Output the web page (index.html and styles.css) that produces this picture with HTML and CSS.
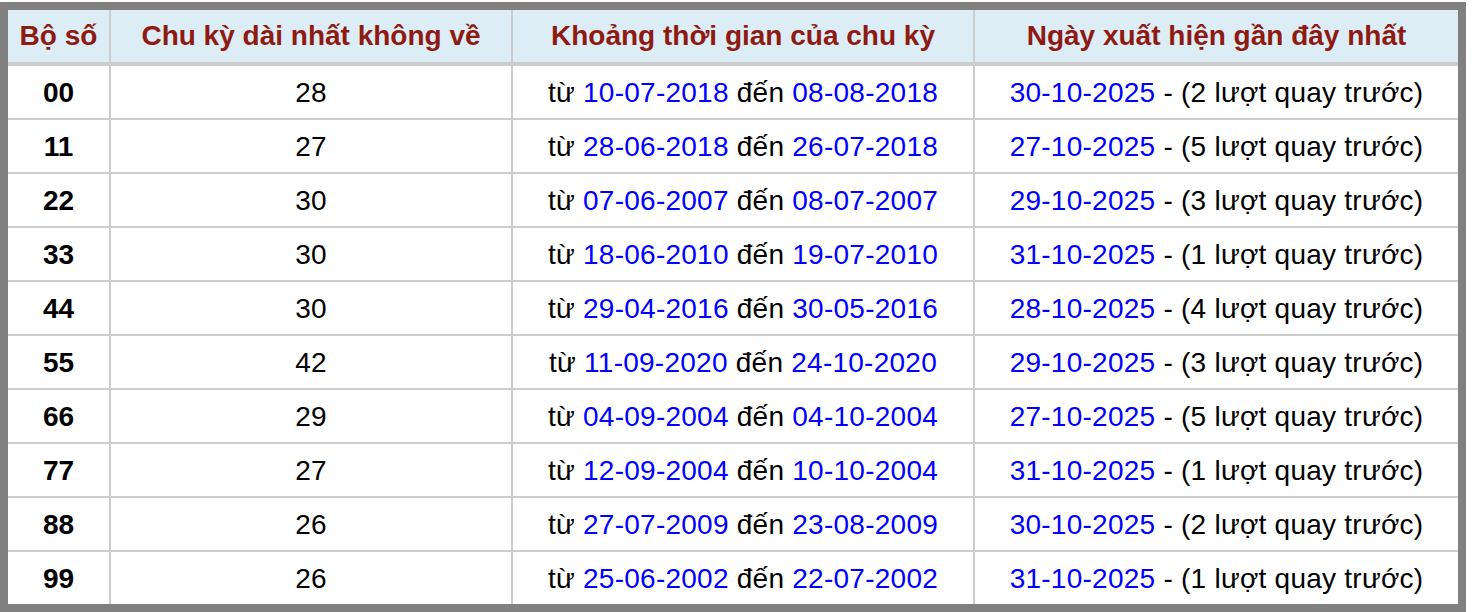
FILE: index.html
```html
<!DOCTYPE html>
<html lang="vi">
<head>
<meta charset="utf-8">
<title>Chu kỳ dài nhất không về</title>
<link rel="stylesheet" href="styles.css">
</head>
<body>
<table class="stats">
  <colgroup>
    <col class="c1"><col class="c2"><col class="c3"><col class="c4">
  </colgroup>
  <thead>
    <tr>
      <th>Bộ số</th>
      <th>Chu kỳ dài nhất không về</th>
      <th>Khoảng thời gian của chu kỳ</th>
      <th>Ngày xuất hiện gần đây nhất</th>
    </tr>
  </thead>
  <tbody>
    <tr><td class="num">00</td><td>28</td><td>từ <span class="d">10-07-2018</span> đến <span class="d">08-08-2018</span></td><td><span class="d">30-10-2025</span> - (2 lượt quay trước)</td></tr>
    <tr><td class="num">11</td><td>27</td><td>từ <span class="d">28-06-2018</span> đến <span class="d">26-07-2018</span></td><td><span class="d">27-10-2025</span> - (5 lượt quay trước)</td></tr>
    <tr><td class="num">22</td><td>30</td><td>từ <span class="d">07-06-2007</span> đến <span class="d">08-07-2007</span></td><td><span class="d">29-10-2025</span> - (3 lượt quay trước)</td></tr>
    <tr><td class="num">33</td><td>30</td><td>từ <span class="d">18-06-2010</span> đến <span class="d">19-07-2010</span></td><td><span class="d">31-10-2025</span> - (1 lượt quay trước)</td></tr>
    <tr><td class="num">44</td><td>30</td><td>từ <span class="d">29-04-2016</span> đến <span class="d">30-05-2016</span></td><td><span class="d">28-10-2025</span> - (4 lượt quay trước)</td></tr>
    <tr><td class="num">55</td><td>42</td><td>từ <span class="d">11-09-2020</span> đến <span class="d">24-10-2020</span></td><td><span class="d">29-10-2025</span> - (3 lượt quay trước)</td></tr>
    <tr><td class="num">66</td><td>29</td><td>từ <span class="d">04-09-2004</span> đến <span class="d">04-10-2004</span></td><td><span class="d">27-10-2025</span> - (5 lượt quay trước)</td></tr>
    <tr><td class="num">77</td><td>27</td><td>từ <span class="d">12-09-2004</span> đến <span class="d">10-10-2004</span></td><td><span class="d">31-10-2025</span> - (1 lượt quay trước)</td></tr>
    <tr><td class="num">88</td><td>26</td><td>từ <span class="d">27-07-2009</span> đến <span class="d">23-08-2009</span></td><td><span class="d">30-10-2025</span> - (2 lượt quay trước)</td></tr>
    <tr><td class="num">99</td><td>26</td><td>từ <span class="d">25-06-2002</span> đến <span class="d">22-07-2002</span></td><td><span class="d">31-10-2025</span> - (1 lượt quay trước)</td></tr>
  </tbody>
</table>
</body>
</html>
```

FILE: styles.css
```css
html, body {
  margin: 0;
  padding: 0;
  background: #ffffff;
}
body {
  padding-top: 2px;
  font-family: "Liberation Sans", Arial, Helvetica, sans-serif;
}
.stats {
  width: 1466px;
  border: 8px solid #808080;
  border-collapse: separate;
  border-spacing: 0;
  table-layout: fixed;
  font-size: 28px;
  color: #000;
}
.c1 { width: 101px; }
.c2 { width: 402px; }
.c3 { width: 462px; }
.c4 { width: 485px; }
.stats th,
.stats td {
  padding: 0;
  line-height: 52px;
  height: 52px;
  text-align: center;
  vertical-align: middle;
  white-space: nowrap;
  border-left: 2px solid #cccccc;
}
.stats th:first-child,
.stats td:first-child {
  border-left: none;
}
.stats th {
  background: #ddedf6;
  color: #8e1a12;
  font-weight: bold;
  border-bottom: 2px solid #cccccc;
}
.stats td {
  border-top: 2px solid #cccccc;
  padding-top: 1px;
  line-height: 51px;
  height: 51px;
  letter-spacing: 0.25px;
}
.stats td.num {
  font-weight: bold;
  letter-spacing: 0;
}
.d {
  color: #0000ff;
}
```
